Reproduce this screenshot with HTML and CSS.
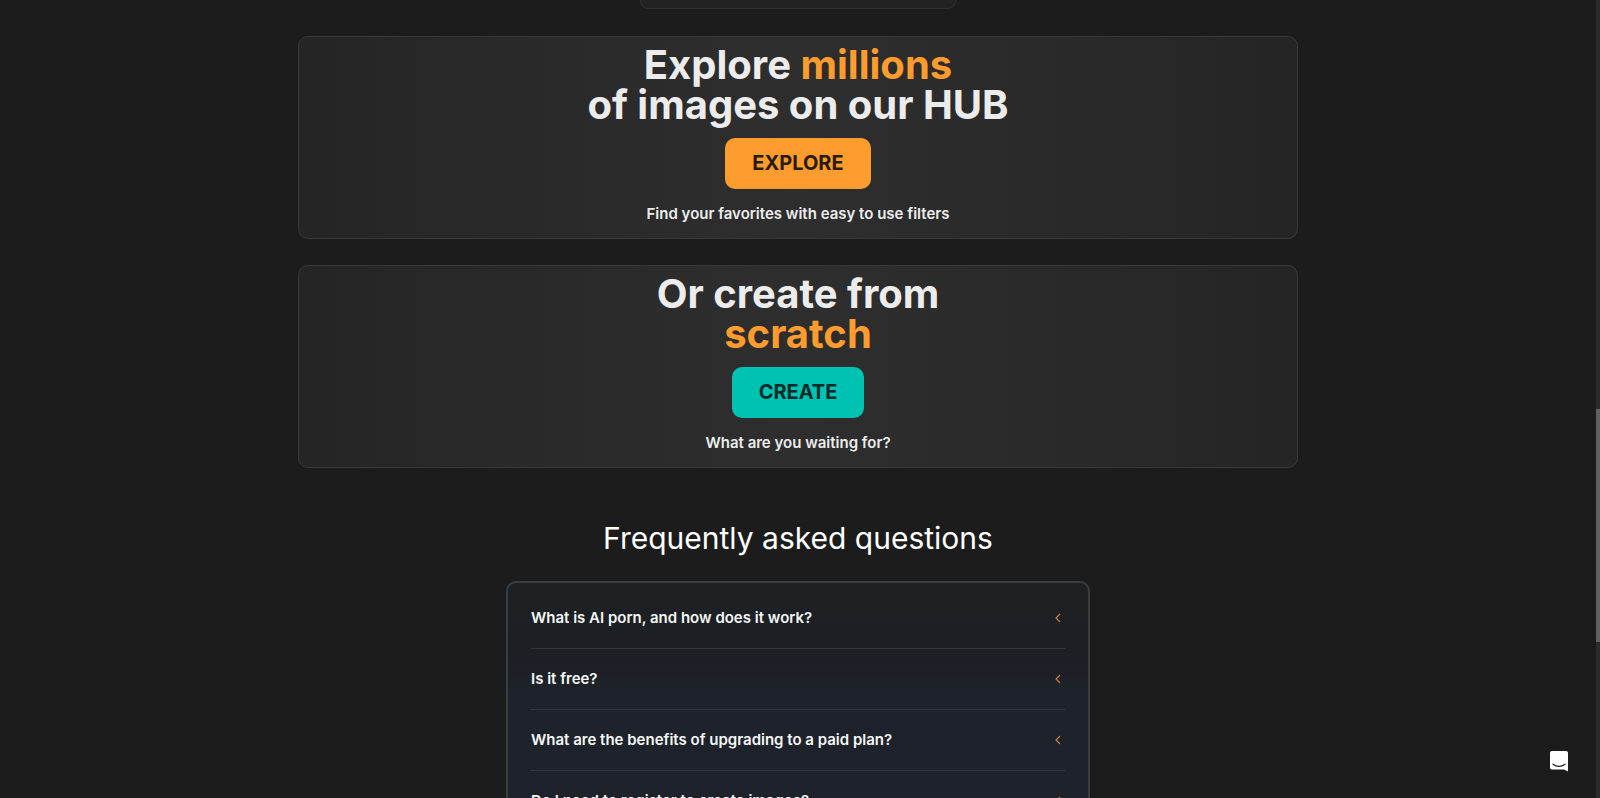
FILE: index.html
```html
<!DOCTYPE html>
<html lang="en">

<head>
    <meta charset="UTF-8">
    <meta name="viewport" content="width=device-width, initial-scale=1">
    <title>Explore and create</title>
    <link rel="stylesheet" href="styles.css">
</head>

<body>
    <main class="page">
        <div class="preview"></div>

        <section class="card">
            <h2>Explore <span class="accent">millions</span><br>of images on our HUB</h2>
            <button type="button" class="btn btn-explore">EXPLORE</button>
            <p>Find your favorites with easy to use filters</p>
        </section>

        <section class="card">
            <h2>Or create from<br><span class="accent">scratch</span></h2>
            <button type="button" class="btn btn-create">CREATE</button>
            <p>What are you waiting for?</p>
        </section>

        <section class="faq">
            <h2>Frequently asked questions</h2>
            <div class="faq-list">
                <button type="button" class="question" aria-expanded="false">
                    <span>What is AI porn, and how does it work?</span>
                    <svg class="chevron" viewBox="0 0 6 10"><path d="M5 1 1 5l4 4" /></svg>
                </button>
                <button type="button" class="question" aria-expanded="false">
                    <span>Is it free?</span>
                    <svg class="chevron" viewBox="0 0 6 10"><path d="M5 1 1 5l4 4" /></svg>
                </button>
                <button type="button" class="question" aria-expanded="false">
                    <span>What are the benefits of upgrading to a paid plan?</span>
                    <svg class="chevron" viewBox="0 0 6 10"><path d="M5 1 1 5l4 4" /></svg>
                </button>
                <button type="button" class="question" aria-expanded="false">
                    <span>Do I need to register to create images?</span>
                    <svg class="chevron" viewBox="0 0 6 10"><path d="M5 1 1 5l4 4" /></svg>
                </button>
            </div>
        </section>
    </main>

    <button type="button" class="chat" aria-label="Open chat">
        <svg viewBox="0 0 18 21">
            <path fill="#fff" d="M2 0h14a2 2 0 0 1 2 2v18.600l-4-2H2a2 2 0 0 1-2-2V2a2 2 0 0 1 2-2z" />
            <path fill="none" stroke="#1c1c1c" stroke-width="1.2" stroke-linecap="round" d="M3 13.200c3.600 2.700 8.400 2.700 12 0" />
        </svg>
    </button>

    <div class="scrollbar">
        <div class="thumb"></div>
    </div>
</body>

</html>
```
FILE: styles.css
```css
* {
    box-sizing: border-box;
}

html,
body {
    height: 100%;
    overflow: hidden;
}

body {
    margin: 0;
    padding-right: 4px;
    background-color: #1c1c1c;
    color: #ececec;
    font-family: Inter, "Liberation Sans", sans-serif;
}

button {
    border: 0;
    font-family: inherit;
    cursor: pointer;
}

.page {
    display: flex;
    flex-direction: column;
    align-items: center;
    gap: 26px;
}

.preview {
    width: 316px;
    height: 9px;
    margin-bottom: 1px;
    background-color: #222;
    border: 1px solid #303030;
    border-top: 0;
    border-radius: 0 0 8px 8px;
}

.card {
    display: flex;
    flex-direction: column;
    align-items: center;
    width: 100%;
    max-width: 1000px;
    padding: 8px 16px 14px;
    background: linear-gradient(90deg, #252525, #2e2e2e 50%, #252525);
    border: 1px solid #383838;
    border-radius: 10px;
    text-align: center;
}

.card h2 {
    margin: 0 0 13px;
    font-size: 40px;
    line-height: 40px;
    font-weight: 700;
}

.accent {
    color: #ff9c2e;
}

.card p {
    margin: 15px 0 0;
    font-size: 15px;
    line-height: 20px;
    font-weight: 600;
}

.btn {
    padding: 13px 27px;
    border-radius: 10px;
    font-size: 20px;
    line-height: 25px;
    font-weight: 700;
}

.btn-explore {
    background-color: #ff9c2e;
    color: #2a1a08;
}

.btn-create {
    background-color: #00c2b2;
    color: #052a27;
}

.faq {
    width: 100%;
    max-width: 584px;
    padding-top: 24px;
    color: #fff;
}

.faq h2 {
    margin: 0 0 23px;
    font-size: 30px;
    line-height: 40px;
    font-weight: 400;
    text-align: center;
}

.faq-list {
    display: flex;
    flex-direction: column;
    padding: 5px 23px;
    background: linear-gradient(#1e2124, #1c2024 60px, #1e222a 120px);
    border: 2px solid #3a3d40;
    border-radius: 10px;
}

.question {
    display: flex;
    justify-content: space-between;
    align-items: center;
    padding: 20px 4px 20px 0;
    background: none;
    border-bottom: 1px solid #33373b;
    color: #f5f7f7;
    font-size: 15px;
    line-height: 20px;
    font-weight: 600;
    text-align: left;
}

.chevron {
    width: 6px;
    height: 10px;
    fill: none;
    stroke: #c87f3c;
    stroke-width: 1.2;
}

/* floating over the page */
.chat {
    position: fixed;
    right: 32px;
    bottom: 26px;
    padding: 0;
    background: none;
}

.chat svg {
    display: block;
    width: 18px;
    height: 21px;
}

.scrollbar {
    position: fixed;
    top: 0;
    right: 0;
    bottom: 0;
    display: grid;
    grid-template-rows: 409fr 233fr 156fr;
    width: 4px;
    background-color: #2b2b2b;
}

.thumb {
    grid-row: 2;
    background-color: #606060;
}
```
